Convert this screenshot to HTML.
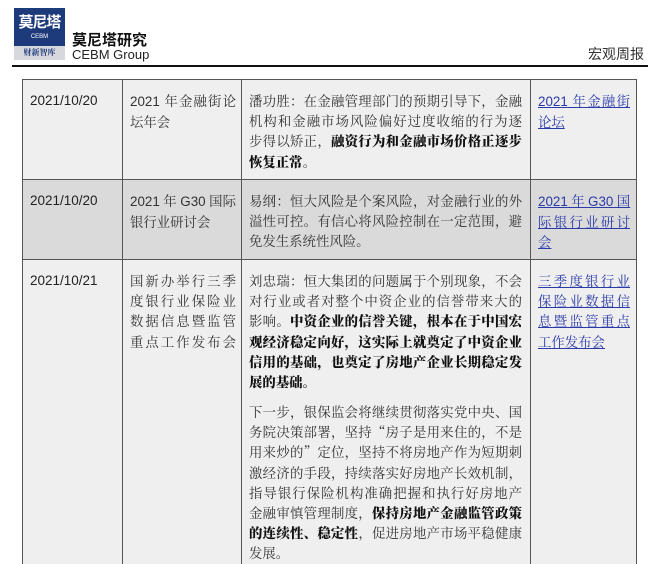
<!DOCTYPE html>
<html><head><meta charset="utf-8"><style>
*{margin:0;padding:0;box-sizing:border-box}
html,body{width:660px;height:564px;overflow:hidden}
body{background:#fff;position:relative;font-family:"Liberation Sans","Noto Serif CJK SC",serif;color:#222}
.abs{position:absolute}
.cell{position:absolute;border:1px solid #555}
.t{position:absolute;font-family:"Noto Serif CJK SC",serif;font-size:13.4px;color:#333;line-height:20.2px}
.t div{white-space:nowrap;text-align:justify;text-align-last:justify}
.t div.l{text-align-last:left}
.d{font-family:"Liberation Sans",sans-serif;font-size:13.5px;color:#222}
.s{font-family:"Liberation Sans",sans-serif}
b{color:#111;font-weight:900}
a{color:#2a3aa8;text-decoration:underline}
</style></head><body>
<div class="abs" style="left:14px;top:8px;width:51px;height:38px;background:#1d3a7a"></div>
<div class="abs" style="left:14px;top:11px;width:51px;text-align:center;color:#fff;font:bold 15px 'Noto Sans CJK SC',sans-serif;letter-spacing:-1px">莫尼塔</div>
<div class="abs" style="left:14px;top:34px;width:51px;text-align:center;color:#fff;font:6px 'Liberation Sans',sans-serif">CEBM</div>
<div class="abs" style="left:14px;top:46px;width:51px;height:14px;background:#d6d8de"></div>
<div class="abs" style="left:14px;top:47px;width:51px;text-align:center;color:#1d3a7a;font:bold 8px 'Noto Serif CJK SC',serif">财新智库</div>
<div class="abs" style="left:72px;top:29px;font:bold 15px 'Noto Sans CJK SC',sans-serif;color:#111">莫尼塔研究</div>
<div class="abs" style="left:72px;top:47px;font:13px 'Liberation Sans',sans-serif;color:#222">CEBM Group</div>
<div class="abs" style="left:588px;top:44px;font:14px 'Noto Sans CJK SC',sans-serif;color:#333">宏观周报</div>
<div class="abs" style="left:12px;top:65px;width:636px;height:2px;background:#111"></div>
<div class="cell" style="left:22px;top:79px;width:101px;height:101px;background:#efefef"></div>
<div class="cell" style="left:122px;top:79px;width:120px;height:101px;background:#efefef"></div>
<div class="cell" style="left:241px;top:79px;width:290px;height:101px;background:#efefef"></div>
<div class="cell" style="left:530px;top:79px;width:107px;height:101px;background:#efefef"></div>
<div class="cell" style="left:22px;top:179px;width:101px;height:81px;background:#dadada"></div>
<div class="cell" style="left:122px;top:179px;width:120px;height:81px;background:#dadada"></div>
<div class="cell" style="left:241px;top:179px;width:290px;height:81px;background:#dadada"></div>
<div class="cell" style="left:530px;top:179px;width:107px;height:81px;background:#dadada"></div>
<div class="cell" style="left:22px;top:259px;width:101px;height:320px;background:#efefef"></div>
<div class="cell" style="left:122px;top:259px;width:120px;height:320px;background:#efefef"></div>
<div class="cell" style="left:241px;top:259px;width:290px;height:320px;background:#efefef"></div>
<div class="cell" style="left:530px;top:259px;width:107px;height:320px;background:#efefef"></div>
<!-- row1 -->
<div class="t d" style="left:30px;top:91px">2021/10/20</div>
<div class="t" style="left:130px;top:91px;width:106px"><div><span class="s">2021</span> 年金融街论</div><div class="l">坛年会</div></div>
<div class="t" style="left:249px;top:91px;width:273px"><div>潘功胜：在金融管理部门的预期引导下，金融</div><div>机构和金融市场风险偏好过度收缩的行为逐</div><div>步得以矫正，<b>融资行为和金融市场价格正逐步</b></div><div class="l"><b>恢复正常</b>。</div></div>
<div class="t" style="left:538px;top:91px;width:92px"><div><a><span class="s">2021</span> 年金融街</a></div><div class="l"><a>论坛</a></div></div>
<!-- row2 -->
<div class="t d" style="left:30px;top:191px">2021/10/20</div>
<div class="t" style="left:130px;top:191px;width:106px"><div><span class="s">2021</span> 年 <span class="s">G30</span> 国际</div><div class="l">银行业研讨会</div></div>
<div class="t" style="left:249px;top:191px;width:273px"><div>易纲：恒大风险是个案风险，对金融行业的外</div><div>溢性可控。有信心将风险控制在一定范围，避</div><div class="l">免发生系统性风险。</div></div>
<div class="t" style="left:538px;top:191px;width:92px"><div><a><span class="s">2021</span> 年 <span class="s">G30</span> 国</a></div><div><a>际银行业研讨</a></div><div class="l"><a>会</a></div></div>
<!-- row3 -->
<div class="t d" style="left:30px;top:271px">2021/10/21</div>
<div class="t" style="left:130px;top:271px;width:106px"><div>国新办举行三季</div><div>度银行业保险业</div><div>数据信息暨监管</div><div>重点工作发布会</div></div>
<div class="t" style="left:249px;top:271px;width:273px"><div>刘忠瑞：恒大集团的问题属于个别现象，不会</div><div>对行业或者对整个中资企业的信誉带来大的</div><div>影响。<b>中资企业的信誉关键，根本在于中国宏</b></div><div><b>观经济稳定向好，这实际上就奠定了中资企业</b></div><div><b>信用的基础，也奠定了房地产企业长期稳定发</b></div><div class="l"><b>展的基础。</b></div></div>
<div class="t" style="left:249px;top:402px;width:273px"><div>下一步，银保监会将继续贯彻落实党中央、国</div><div>务院决策部署，坚持“房子是用来住的，不是</div><div>用来炒的”定位，坚持不将房地产作为短期刺</div><div>激经济的手段，持续落实好房地产长效机制，</div><div>指导银行保险机构准确把握和执行好房地产</div><div>金融审慎管理制度，<b>保持房地产金融监管政策</b></div><div><b>的连续性、稳定性</b>，促进房地产市场平稳健康</div><div class="l">发展。</div></div>
<div class="t" style="left:538px;top:271px;width:92px"><div><a>三季度银行业</a></div><div><a>保险业数据信</a></div><div><a>息暨监管重点</a></div><div class="l"><a>工作发布会</a></div></div>
</body></html>
